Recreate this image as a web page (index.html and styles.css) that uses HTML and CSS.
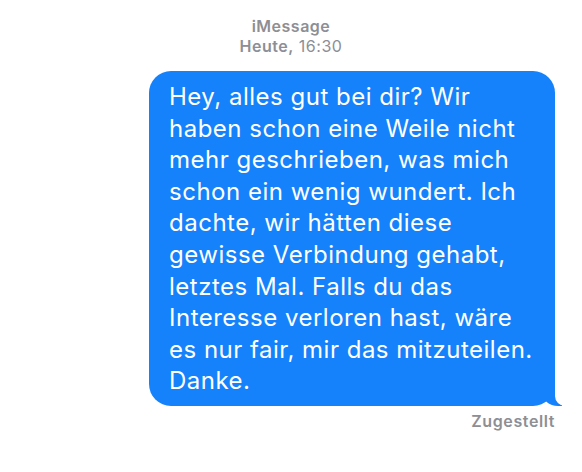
FILE: index.html
```html
<!DOCTYPE html>
<html lang="de">

<head>
  <meta charset="UTF-8">
  <meta name="viewport" content="width=device-width, initial-scale=1.0">
  <title>iMessage</title>
  <link rel="stylesheet" href="styles.css">
</head>

<body>
  <div class="chat">
    <div class="meta">
      <div class="service">iMessage</div>
      <div class="time"><b>Heute,</b> 16:30</div>
    </div>

    <div class="row">
      <div class="bubble sent">
        Hey, alles gut bei dir? Wir haben schon eine Weile nicht mehr geschrieben, was mich schon ein wenig wundert. Ich dachte, wir hätten diese gewisse Verbindung gehabt, letztes Mal. Falls du das Interesse verloren hast, wäre es nur fair, mir das mitzuteilen. Danke.
      </div>
    </div>

    <div class="status">Zugestellt</div>
  </div>
</body>

</html>
```

FILE: styles.css
```css
/* chat view */

body {
  margin: 0;
  background-color: #fff;
  font-family: Inter, "Liberation Sans", sans-serif;
}

.chat {
  padding: 16px 27px 0 0;
}

.meta {
  padding-left: 27px;
  text-align: center;
  color: #8e8e93;
  font-size: 16px;
  line-height: 20px;
  letter-spacing: 0.5px;
}

.service {
  font-weight: 600;
}

.time b {
  font-weight: 600;
}

.row {
  display: flex;
  justify-content: flex-end;
  margin-top: 15px;
}

.bubble {
  position: relative;
  width: 364px;
  padding: 10px 22px 9px 20px;
  border-radius: 22px;
  font-size: 24px;
  line-height: 31.6px;
  letter-spacing: 0.5px;
  color: #fff;
}

.sent {
  background-color: #1582fb;
}

/* tail */
.sent::before,
.sent::after {
  content: "";
  position: absolute;
  bottom: 0;
  height: 25px;
}

.sent::before {
  right: -7px;
  width: 20px;
  background-color: #1582fb;
  border-bottom-left-radius: 16px 14px;
}

.sent::after {
  right: -26px;
  width: 26px;
  background-color: #fff;
  border-bottom-left-radius: 10px;
}

.status {
  margin-top: 5px;
  text-align: right;
  color: #8e8e93;
  font-size: 16px;
  font-weight: 600;
  letter-spacing: 0.6px;
}
```
